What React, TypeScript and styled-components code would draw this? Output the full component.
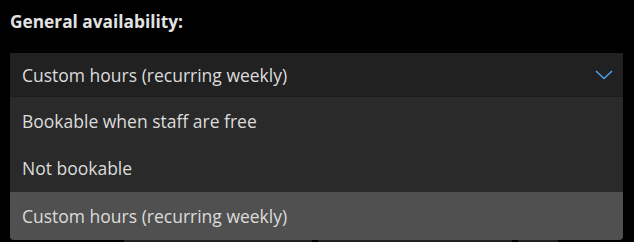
import React from "react";
import styled, { createGlobalStyle } from "styled-components";

const Global = createGlobalStyle`
  html, body { margin: 0; padding: 0; background: #000; }
  body { font-family: "Open Sans", "Noto Sans", sans-serif; color: #dedede; }
`;

const Page = styled.div`
  width: 634px;
  height: 242px;
  overflow: hidden;
  padding: 0 11px 0 10px;
  box-sizing: border-box;
  display: flex;
  flex-direction: column;
  & > * { flex-shrink: 0; }
`;

const Title = styled.div`
  font-size: 17.3px;
  font-weight: 700;
  color: #e2e2e2;
  padding-top: 10px;
  height: 53px;
  box-sizing: border-box;
  line-height: 24px;
`;

const SelectWrap = styled.div`
  position: relative;
`;

const Select = styled.div`
  height: 43px;
  background: #212121;
  display: flex;
  align-items: center;
  justify-content: space-between;
  padding: 0 10px 0 12px;
  font-size: 17.5px;
  color: #dcdcdc;
`;

const Menu = styled.div`
  position: absolute;
  top: 43px;
  left: 0;
  right: 0;
  background: #2a2a2a;
  border-top: 1px solid #1c1c1c;
  border-radius: 0 0 4px 4px;
  overflow: hidden;
  z-index: 2;
`;

const Option = styled.div<{ $active?: boolean }>`
  height: 47.5px;
  display: flex;
  align-items: center;
  padding-left: 12px;
  font-size: 17.5px;
  color: #dcdcdc;
  background: ${(p) => (p.$active ? "#505050" : "transparent")};
`;

const Below = styled.div`
  display: flex;
  gap: 6px;
  margin-top: 122px;
  padding-left: 114px;
`;

const TimeBox = styled.div<{ $w: number }>`
  width: ${(p) => p.$w}px;
  height: 40px;
  background: #202020;
  font-size: 15px;
  color: #cfcfcf;
  padding: 18px 0 0 21px;
  box-sizing: border-box;
`;

export default function App() {
  return (
    <>
      <Global />
      <Page>
        <Title>General availability:</Title>
        <SelectWrap>
          <Select>
            <span>Custom hours (recurring weekly)</span>
            <svg width="18" height="10" viewBox="0 0 18 10">
              <path d="M1 1 L9 8.5 L17 1" fill="none" stroke="#4f9ee8" strokeWidth="1.6" />
            </svg>
          </Select>
          <Menu>
            <Option>Bookable when staff are free</Option>
            <Option>Not bookable</Option>
            <Option $active>Custom hours (recurring weekly)</Option>
          </Menu>
        </SelectWrap>
        <Below>
          <TimeBox $w={188}>9:00 AM</TimeBox>
          <TimeBox $w={194}>5:00 PM</TimeBox>
          <TimeBox $w={40}>-</TimeBox>
        </Below>
      </Page>
    </>
  );
}
